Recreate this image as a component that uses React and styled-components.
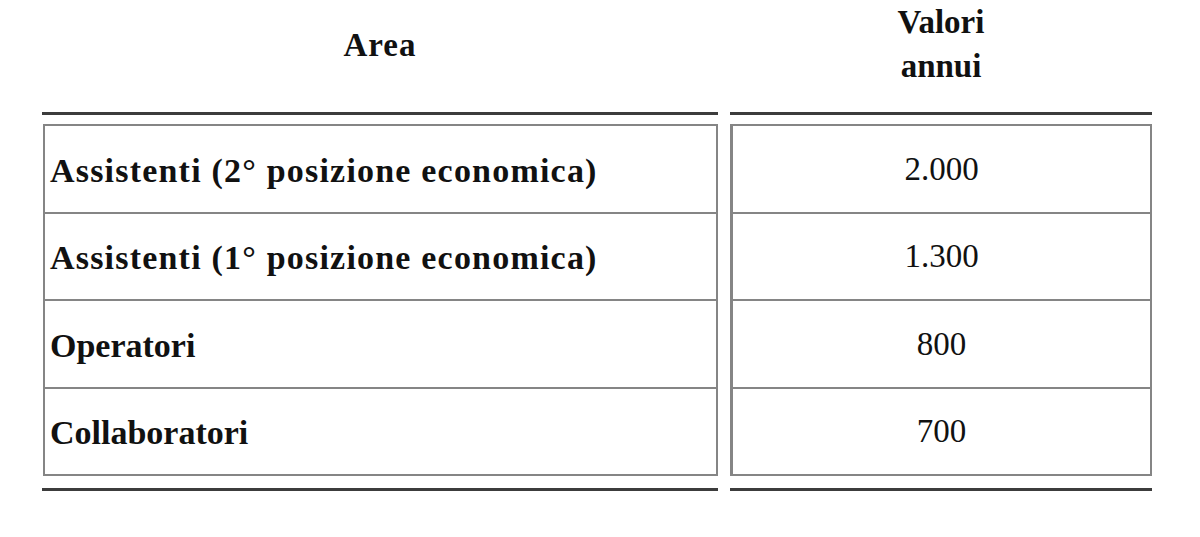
import React from "react";
import styled, { createGlobalStyle } from "styled-components";

const GlobalStyle = createGlobalStyle`
  body {
    margin: 0;
    background: #ffffff;
    font-family: "Liberation Serif", "Times New Roman", serif;
    color: #111111;
  }
`;

const Page = styled.div`
  width: 1200px;
  height: 537px;
  padding-left: 42px;
  box-sizing: border-box;
  display: grid;
  grid-template-columns: 676px 422px;
  column-gap: 12px;
  align-items: start;
`;

const Column = styled.div`
  display: flex;
  flex-direction: column;
`;

const HeaderCell = styled.div`
  height: 88px;
  margin-bottom: 24px;
  padding-top: ${(p) => (p.$single ? "2px" : "0")};
  box-sizing: border-box;
  display: flex;
  align-items: center;
  justify-content: center;
  text-align: center;
  font-size: 33px;
  font-weight: 700;
  line-height: 44px;
  letter-spacing: ${(p) => (p.$spaced ? "1px" : "0")};
`;

const Rule = styled.div`
  height: 3px;
  background: #3c3c3c;
`;

const Box = styled.div`
  margin-top: 9px;
  margin-bottom: 12px;
  border: 2px solid #858585;
  border-left-width: ${(p) => (p.$thickLeft ? "3px" : "2px")};
  margin-left: ${(p) => (p.$thickLeft ? "0" : "1px")};
  display: flex;
  flex-direction: column;
`;

const Row = styled.div`
  display: flex;
  align-items: center;
  justify-content: ${(p) => (p.$center ? "center" : "flex-start")};
  padding: ${(p) => (p.$center ? "1px 0 0 0" : "4px 0 0 5px")};
  box-sizing: border-box;
  border-top: ${(p) => (p.$first ? "none" : "2px solid #858585")};
  height: ${(p) => (p.$first ? "85.5px" : "87.5px")};
  font-size: ${(p) => (p.$center ? "33px" : "34px")};
  font-weight: ${(p) => (p.$center ? 400 : 700)};
  letter-spacing: ${(p) => (p.$spaced ? "1.2px" : "0")};
  white-space: nowrap;
`;

const rows = [
  { area: "Assistenti (2° posizione economica)", value: "2.000", spaced: true },
  { area: "Assistenti (1° posizione economica)", value: "1.300", spaced: true },
  { area: "Operatori", value: "800" },
  { area: "Collaboratori", value: "700" },
];

export default function App() {
  return (
    <>
      <GlobalStyle />
      <Page>
        <Column>
          <HeaderCell $single $spaced>Area</HeaderCell>
          <Rule />
          <Box>
            {rows.map((r, i) => (
              <Row key={r.area} $first={i === 0} $spaced={r.spaced}>
                {r.area}
              </Row>
            ))}
          </Box>
          <Rule />
        </Column>
        <Column>
          <HeaderCell>
            Valori
            <br />
            annui
          </HeaderCell>
          <Rule />
          <Box $thickLeft>
            {rows.map((r, i) => (
              <Row key={r.value} $first={i === 0} $center>
                {r.value}
              </Row>
            ))}
          </Box>
          <Rule />
        </Column>
      </Page>
    </>
  );
}
